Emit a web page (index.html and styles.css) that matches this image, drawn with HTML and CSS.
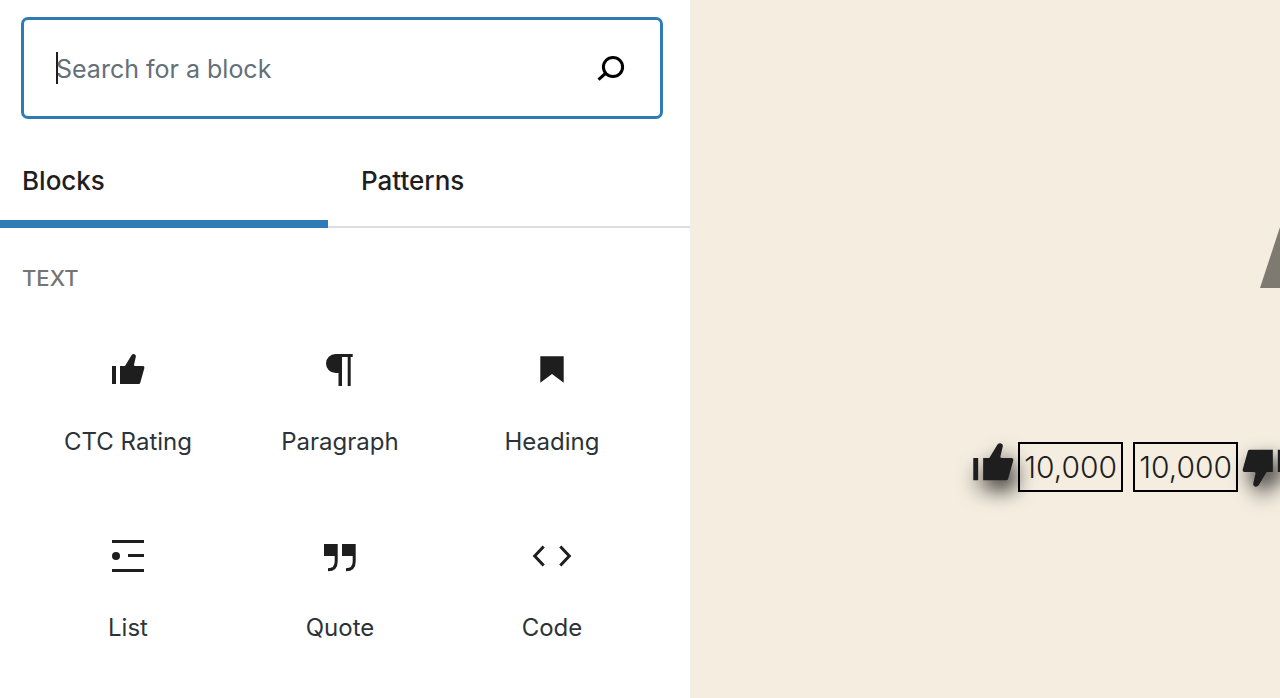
FILE: index.html
```html
<!DOCTYPE html>
<html lang="en">
<head>
<meta charset="utf-8">
<title>Block inserter</title>
<link rel="stylesheet" href="styles.css">
</head>
<body>
<svg class="symbols" aria-hidden="true">
  <symbol id="thumb-shape" viewBox="0 0 48 48">
    <path d="M8 20h4v18H8zM16 20h5l6.500-10.800Q28.400 8 30 8.100Q32.200 8.600 31.900 10.600L30 18.700Q29.900 20 31 20H39.300Q40.700 20.300 40.400 22L36.200 37Q35.900 38 34.800 38H16z"/>
  </symbol>
</svg>
<div class="editor">
  <aside class="inserter">
    <form class="search" role="search">
      <span class="caret"></span>
      <input class="search-input" type="text" placeholder="Search for a block" aria-label="Search for a block">
      <button class="search-button" type="button" aria-label="Search">
        <svg class="search-icon" viewBox="0 0 30 30"><circle cx="17" cy="13" r="9.600"/><path d="M10 19l-7.500 6.600"/></svg>
      </button>
    </form>
    <div class="tabs" role="tablist">
      <button class="tab tab-active" type="button" role="tab" aria-selected="true">Blocks</button>
      <button class="tab" type="button" role="tab" aria-selected="false">Patterns</button>
    </div>
    <h2 class="category">TEXT</h2>
    <div class="blocks">
      <button class="block" type="button">
        <svg class="icon" viewBox="0 0 48 48"><use href="#thumb-shape"/></svg>
        <span>CTC Rating</span>
      </button>
      <button class="block" type="button">
        <svg class="icon" viewBox="0 0 48 48"><path d="M19.500 8H36.700v3H34.700V40h-3V11H26v29h-3.500V27H19.500a9.500 9.500 0 0 1 0-19z"/></svg>
        <span>Paragraph</span>
      </button>
      <button class="block" type="button">
        <svg class="icon" viewBox="0 0 48 48"><path d="M12.300 10.300h23.400v26.500L24 28l-11.700 8.800z"/></svg>
        <span>Heading</span>
      </button>
      <button class="block" type="button">
        <svg class="icon" viewBox="0 0 48 48"><path d="M8 8h32v3H8zM24 22h16v3H24zM8 37h32v3H8z"/><circle cx="12" cy="24" r="4"/></svg>
        <span>List</span>
      </button>
      <button class="block" type="button">
        <svg class="icon" viewBox="0 0 48 48"><path d="M8 12h13.700v17.500Q21.700 39.300 12 39.300v-3Q18.700 36.300 18.700 29.500V24H8zM26 12h13.700v17.500Q39.700 39.300 30 39.300v-3Q36.700 36.300 36.700 29.500V24H26z"/></svg>
        <span>Quote</span>
      </button>
      <button class="block" type="button">
        <svg class="icon icon-line" viewBox="0 0 48 48"><path d="M15.700 14.500L6.700 24l9 9.500M32.300 14.500l9 9.500-9 9.500"/></svg>
        <span>Code</span>
      </button>
    </div>
  </aside>
  <main class="canvas">
    <div class="title-shape"></div>
    <div class="rating">
      <button class="vote" type="button" aria-label="Thumbs up">
        <svg class="vote-icon" viewBox="8 7 36 34"><use href="#thumb-shape" width="48" height="48"/></svg>
      </button>
      <span class="count">10,000</span>
      <span class="count count-down">10,000</span>
      <button class="vote vote-down" type="button" aria-label="Thumbs down">
        <svg class="vote-icon vote-icon-down" viewBox="8 7 36 34"><use href="#thumb-shape" width="48" height="48"/></svg>
      </button>
    </div>
  </main>
</div>
</body>
</html>
```
FILE: styles.css
```css
* {
  box-sizing: border-box;
}

body {
  margin: 0;
  font-family: Inter, "Liberation Sans", sans-serif;
  color: #1e1e1e;
  background: #fff;
}

button {
  font: inherit;
  color: inherit;
  background: none;
  border: 0;
  padding: 0;
}

.symbols {
  position: absolute;
  width: 0;
  height: 0;
}

.editor {
  display: grid;
  grid-template-columns: 69fr 59fr;
  min-height: 100vh;
  overflow: hidden;
}

.inserter {
  padding-top: 17px;
}

.search {
  position: relative;
  display: flex;
  align-items: center;
  margin: 0 27px 0 21px;
  padding: 0 34px 0 32px;
  border: 3px solid #2f7bb6;
  border-radius: 7px;
}

.caret {
  position: absolute;
  left: 32px;
  width: 2px;
  height: 32px;
  background: #1e1e1e;
}

.search-input {
  flex: 1;
  min-width: 0;
  height: 96px;
  padding: 2px 0 0;
  border: 0;
  outline: 0;
  font: 25px/32px Inter, "Liberation Sans", sans-serif;
  color: #1e1e1e;
  background: none;
}

.search-input::placeholder {
  color: #646f78;
  opacity: 1;
}

.search-button,
.search-icon {
  display: block;
  width: 30px;
  height: 30px;
}

.search-button {
  height: 32px;
  padding-top: 2px;
}

.search-icon {
  fill: none;
  stroke: #000;
  stroke-width: 3;
}

.tabs {
  display: grid;
  grid-template-columns: 328fr 362fr;
  height: 109px;
  box-shadow: inset 0 -2px #ddd;
}

.tab {
  padding: 22px 33px 0;
  border-bottom: 8px solid transparent;
  font-size: 26px;
  line-height: 32px;
  font-weight: 500;
  text-align: left;
}

.tab-active {
  padding-left: 22px;
  border-bottom-color: #2f7bb6;
}

.category {
  margin: 36px 22px 0;
  font-size: 22px;
  line-height: 28px;
  font-weight: 500;
  color: #757575;
}

.blocks {
  display: grid;
  grid-template-columns: repeat(3, 1fr);
  padding: 22px 32px 0 22px;
}

.block {
  display: flex;
  flex-direction: column;
  align-items: center;
  gap: 32px;
  height: 186px;
  padding-top: 32px;
  font-size: 24px;
  line-height: 32px;
  color: #2c3338;
}

.icon {
  width: 48px;
  height: 48px;
  fill: #1e1e1e;
}

.icon-line {
  fill: none;
  stroke: #1e1e1e;
  stroke-width: 3;
}

.canvas {
  min-width: 0;
  padding-top: 227px;
  border-left: 2px solid #eee;
  background: #f4ede0;
}

.title-shape {
  width: 20px;
  height: 61px;
  margin-left: auto;
  background: #7e7a72;
  clip-path: polygon(100% 0, 100% 100%, 0 100%);
}

.rating {
  display: flex;
  align-items: center;
  justify-content: flex-end;
  margin: 154px -3px 0 0;
}

.vote {
  flex: none;
  align-self: flex-start;
}

.vote-down {
  align-self: center;
}

.vote-icon {
  display: block;
  width: 45px;
  height: 42px;
  fill: #1e1e1e;
  overflow: visible;
  filter: drop-shadow(5px 10px 10px rgba(0, 0, 0, 0.8));
}

.vote-icon-down {
  transform: rotate(180deg);
  filter: drop-shadow(-5px -10px 10px rgba(0, 0, 0, 0.8));
}

.count {
  position: relative;
  padding: 0 4px;
  border: 2px solid #000;
  font-size: 30px;
  line-height: 46px;
  font-weight: 300;
}

.count-down {
  margin-left: 10px;
}
```
